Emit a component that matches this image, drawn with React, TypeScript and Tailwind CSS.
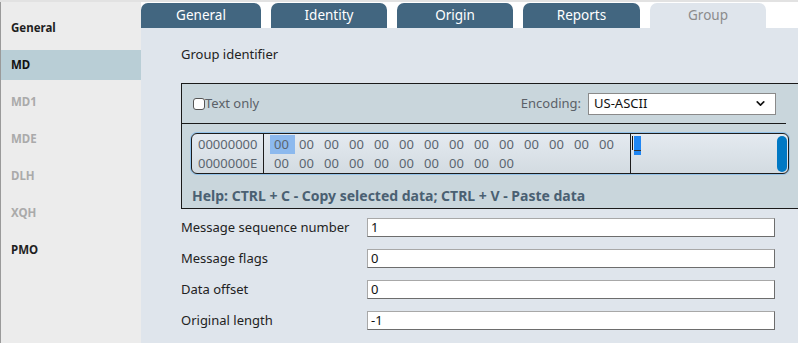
import { ChevronDown } from 'lucide-react';

const sideItems = [
  { label: 'General', tone: 'text-[#1f1f1f]' },
  { label: 'MD', tone: 'text-[#111]', active: true },
  { label: 'MD1', tone: 'text-[#aaaaaa]' },
  { label: 'MDE', tone: 'text-[#aaaaaa]' },
  { label: 'DLH', tone: 'text-[#aaaaaa]' },
  { label: 'XQH', tone: 'text-[#aaaaaa]' },
  { label: 'PMO', tone: 'text-[#1f1f1f]' },
];

const tabs = [
  { label: 'General', w: 'w-[120px]' },
  { label: 'Identity', w: 'w-[116px]' },
  { label: 'Origin', w: 'w-[116px]' },
  { label: 'Reports', w: 'w-[117px]' },
  { label: 'Group', w: 'w-[116px]' },
];

const fields = [
  { label: 'Message sequence number', value: '1' },
  { label: 'Message flags', value: '0' },
  { label: 'Data offset', value: '0' },
  { label: 'Original length', value: '-1' },
];

const row1 = Array.from({ length: 14 });
const row2 = Array.from({ length: 10 });

export default function App() {
  return (
    <div
      className="w-[798px] h-[343px] flex overflow-hidden bg-white border-t-2 border-[#e2e2e2]"
      style={{ fontFamily: '"Noto Sans", "Open Sans", sans-serif' }}
    >
      {/* sidebar */}
      <div className="w-[141px] shrink-0 bg-[#ececec] border-l border-[#9a9a9a] pt-[11px] flex flex-col gap-[7px]">
        {sideItems.map((it) => (
          <div
            key={it.label}
            className={`h-[30px] flex items-center pl-[10px] text-[11.5px] font-bold ${it.tone} ${it.active ? 'bg-[#b9ced6]' : ''}`}
          >
            {it.label}
          </div>
        ))}
      </div>

      {/* main */}
      <div className="flex-1 flex flex-col">
        <div className="h-[26px] pt-[1px] flex gap-[10px] bg-white">
          {tabs.map((t) => (
            <div
              key={t.label}
              className={`h-[25px] rounded-t-[7px] flex items-center justify-center text-[13.5px] ${t.w} ${t.label === 'Group' ? 'bg-[#dfe5ec] text-[#8c8c8c]' : 'bg-[#426680] text-white'}`}
            >
              {t.label}
            </div>
          ))}
        </div>

        <div className="flex-1 bg-[#dfe5ec] pl-[40px] pt-[16px]">
          <div className="text-[13px] text-[#222] h-[20px] leading-[20px]">Group identifier</div>

          {/* hex editor */}
          <div className="mt-[19px] w-[640px] border border-r-0 border-[#1a1a1a] bg-[#c9d6dc]">
            <div className="w-[604px] h-[40px] border-b border-[#1a1a1a] flex items-center pl-[11px] pr-[10px]">
              <label className="flex items-center text-[13px] text-[#5b6168]">
                <span className="w-[12px] h-[12px] rounded-[3px] border border-[#555] bg-white" />
                Text only
              </label>
              <div className="ml-auto flex items-center gap-[7px]">
                <span className="text-[13px] text-[#5b6168]">Encoding:</span>
                <div className="w-[188px] h-[22px] bg-white border border-[#8a8a8a] flex items-center pl-[5px] pr-[8px] text-[13px] text-[#111]">
                  US-ASCII
                  <ChevronDown className="ml-auto w-[13px] h-[13px]" strokeWidth={3} />
                </div>
              </div>
            </div>

            <div className="pt-[9px] pl-[9px]">
              <div className="w-[598px] h-[41px] rounded-[6px] border border-[#1c1c1c] ring-1 ring-[#94c3ea] bg-gradient-to-b from-[#e4eaf0] to-[#d3dbe1] flex text-[13px] text-[#5b656f] leading-[19px]">
                <div className="w-[72px] border-r border-[#1c1c1c] pl-[6px] pt-px">
                  <div>00000000</div>
                  <div>0000000E</div>
                </div>
                <div className="w-[367px] border-r border-[#1c1c1c] pl-[6px] pt-px">
                  <div className="flex">
                    {row1.map((_, i) => (
                      <span key={i} className={`w-[25px] ${i === 0 ? 'bg-[#8cb9ee]' : ''} pl-[4px]`}>00</span>
                    ))}
                  </div>
                  <div className="flex">
                    {row2.map((_, i) => (
                      <span key={i} className="w-[25px] pl-[4px]">00</span>
                    ))}
                  </div>
                </div>
                <div className="flex-1 flex pt-px pr-[1px]">
                  <div className="relative ml-[3px] mt-[1px] h-[18px]">
                    <div className="absolute left-[-2px] top-0 w-px h-[14px] bg-[#111]" />
                    <div className="w-[7px] h-[19px] bg-[#1f86f3]" />
                    <div className="absolute left-0 top-[14px] w-[7px] h-px bg-[#333]" />
                  </div>
                  <div className="ml-auto mt-[1px] w-[10px] h-[36px] rounded-[5px] bg-[#0078c4]" />
                </div>
              </div>
            </div>

            <div className="pl-[10px] pt-[12px] pb-[3px] leading-[19px] text-[14px] font-bold text-[#4a6072]">
              Help: CTRL + C - Copy selected data; CTRL + V - Paste data
            </div>
          </div>

          {/* fields */}
          <div className="mt-[9px] flex flex-col gap-[12px]">
            {fields.map((f) => (
              <div key={f.label} className="flex items-center h-[19px]">
                <div className="w-[186px] text-[13px] text-[#222]">{f.label}</div>
                <div className="w-[408px] h-[19px] bg-white border border-[#a8a8a8] border-r-[#6d6d6d] border-b-[#6d6d6d] flex items-center pl-[3px] text-[13px] text-[#111]">
                  {f.value}
                </div>
              </div>
            ))}
          </div>
        </div>
      </div>
    </div>
  );
}
